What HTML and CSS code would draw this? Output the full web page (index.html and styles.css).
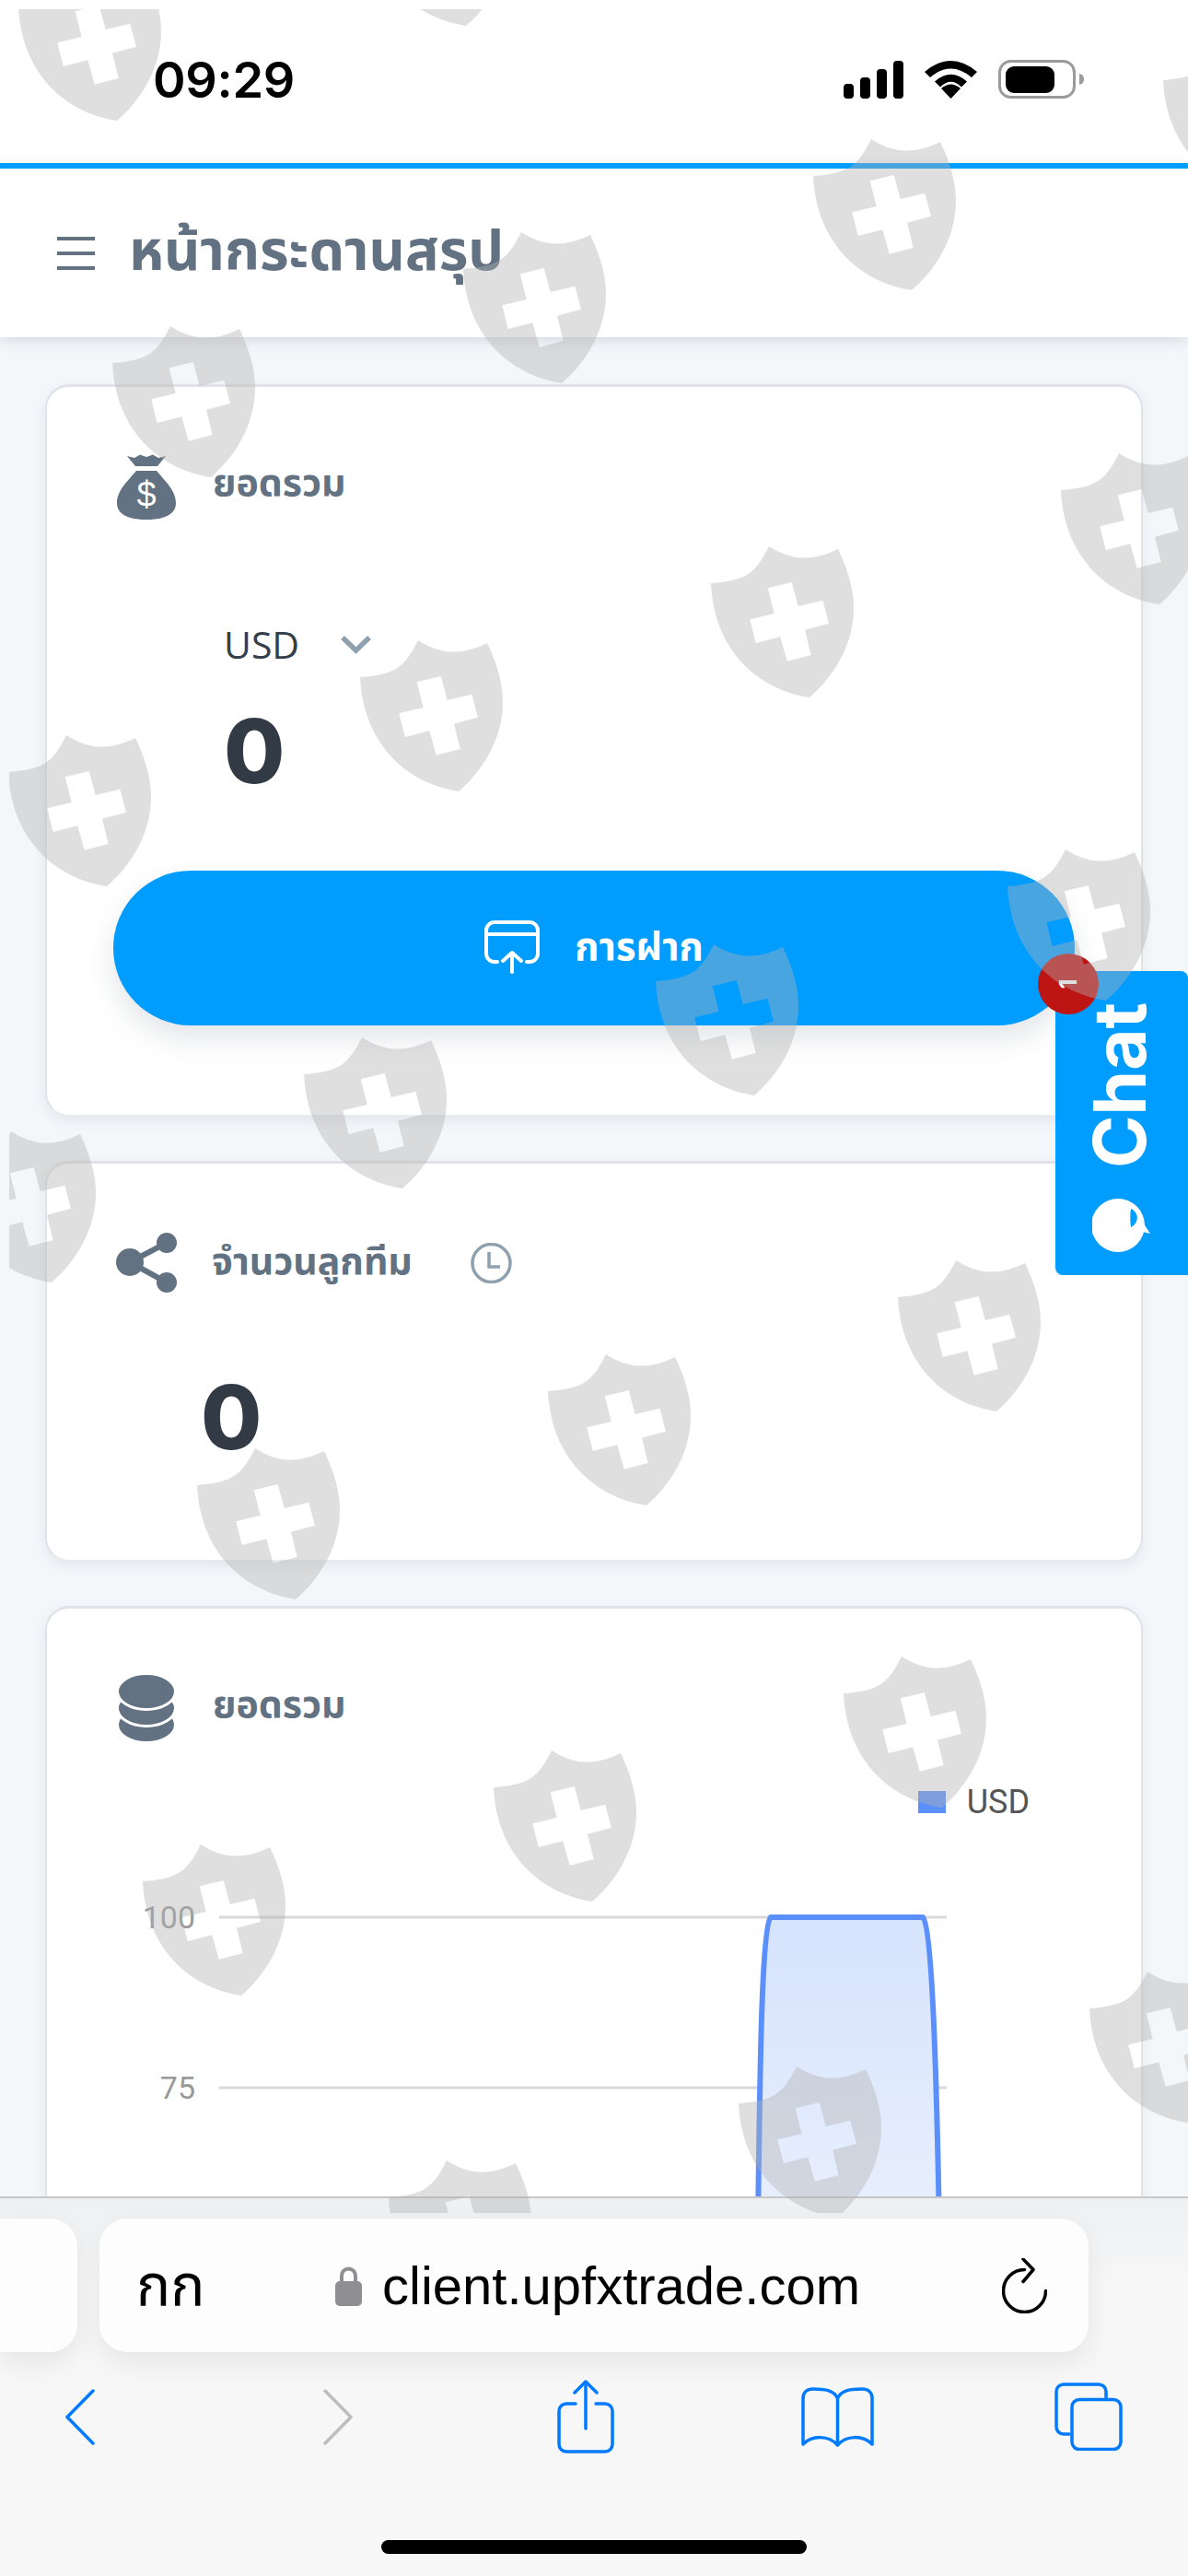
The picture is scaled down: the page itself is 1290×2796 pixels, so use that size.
FILE: index.html
```html
<!DOCTYPE html>
<html lang="th">
<head>
<meta charset="utf-8">
<title>หน้ากระดานสรุป</title>
<link rel="stylesheet" href="styles.css">
</head>
<body>
<div class="statusbar">
  <span class="time">09:29</span>
  <div class="status-icons">
    <svg class="ic-signal" viewBox="0 0 65 41"><rect x="0" y="25" width="11" height="16" rx="4"/><rect x="18" y="18" width="11" height="23" rx="4"/><rect x="36" y="9" width="11" height="32" rx="4"/><rect x="54" y="0" width="11" height="41" rx="4"/></svg>
    <svg class="ic-wifi" viewBox="0 0 57 42"><path d="M28.5 42 18 31q10.500-9 21 0z"/><path d="M11 23.500q17.500-15.500 35 0l-6 6q-11.500-11.500-23 0z"/><path d="M0 13q28.500-24 57 0l-6 6q-22.500-19-45 0z"/></svg>
    <svg class="ic-batt" viewBox="0 0 93 42"><rect x="1.500" y="1.500" width="81" height="39" rx="12" class="batt-frame"/><rect x="8" y="7" width="53" height="29" rx="9"/><path d="M88 15q5 1 5 6t-5 6z" class="batt-tip"/></svg>
  </div>
</div>
<header class="topbar">
  <svg class="ic-menu" viewBox="0 0 41 36"><path d="M0 2h41M0 18h41M0 34h41"/></svg>
  <h1 class="page-title">หน้ากระดานสรุป</h1>
</header>
<main class="content">
  <section class="card card-balance">
    <div class="card-head">
      <svg class="ic-bag" viewBox="0 0 64 72"><path d="M11 3l8 2 6-3.500L32 4l7-2.500L45 5l8-2-9 11H20z"/><path d="M21 19h22c9 11 21 21 21 35 0 12-12 18-32 18S0 66 0 54c0-14 12-24 21-35z"/><text x="32" y="58" class="bag-dollar">$</text></svg>
      <h2 class="card-title">ยอดรวม</h2>
    </div>
    <div class="currency">
      <span>USD</span>
      <svg class="ic-chev" viewBox="0 0 35 21"><path d="M3 3l14.500 14L32 3"/></svg>
    </div>
    <div class="big-num balance-num">0</div>
    <button class="deposit" type="button">
      <svg class="ic-upload" viewBox="0 0 62 60"><path d="M14 45h-3a9 9 0 0 1-9-9V11a9 9 0 0 1 9-9h38a9 9 0 0 1 9 9v25a9 9 0 0 1-9 9h-3M2 15h56M30 56V36M20 44l10-9 10 9"/></svg>
      <span class="deposit-label">การฝาก</span>
    </button>
  </section>
  <section class="card card-team">
    <div class="card-head head-team">
      <svg class="ic-share" viewBox="0 0 66 65"><path d="M15 32 55 11M15 32l40 22" class="share-line"/><circle cx="15" cy="32" r="15"/><circle cx="55" cy="11" r="11"/><circle cx="55" cy="54" r="11"/></svg>
      <h2 class="card-title">จำนวนลูกทีม</h2>
      <svg class="ic-clock" viewBox="0 0 45 44"><circle cx="22.500" cy="22" r="20.500"/><path d="M20 10v16h12"/></svg>
    </div>
    <div class="big-num team-num">0</div>
  </section>
  <section class="card card-chart">
    <div class="card-head head-chart">
      <svg class="ic-db" viewBox="0 0 60 72"><ellipse cx="30" cy="54" rx="30" ry="18"/><ellipse cx="30" cy="36" rx="31.500" ry="19.500" class="db-gap"/><ellipse cx="30" cy="18" rx="31.500" ry="19.500" class="db-gap"/></svg>
      <h2 class="card-title">ยอดรวม</h2>
    </div>
    <div class="legend"><i class="swatch"></i><span>USD</span></div>
    <svg class="chart" viewBox="0 0 1000 420">
      <defs><linearGradient id="areaFill" x1="0" y1="0" x2="0" y2="1"><stop offset="0" stop-color="#d6e3fd"/><stop offset="1" stop-color="#e9f0fd"/></linearGradient></defs>
      <path d="M111 81H901M111 266H901" class="grid"/>
      <text x="85" y="93" class="axis">100</text>
      <text x="85" y="278" class="axis">75</text>
      <path d="M696 420C698 250 700 90 710 81H875C885 90 890 250 893 420Z" class="area"/>
      <path d="M696 420C698 250 700 90 710 81H875C885 90 890 250 893 420" class="line"/>
    </svg>
  </section>
</main>
<aside class="chat">
  <span class="chat-badge"><b>1</b></span>
  <span class="chat-label">Chat</span>
  <svg class="ic-chat" viewBox="0 0 64 60"><circle cx="28" cy="30" r="29"/><path d="M40 4 63 39 50 36 30 20z"/><path d="M42 12c8 3 10 15 0 20-1-7-1-14 0-20z" class="chat-eye"/></svg>
</aside>
<div class="toolbar">
  <div class="url-row">
    <div class="prev-tab"></div>
    <div class="urlbar">
      <span class="aa">กก</span>
      <svg class="ic-lock" viewBox="0 0 29 43"><path d="M7 18V10a7.500 7.500 0 0 1 15 0v8" class="lock-arc"/><rect y="16" width="29" height="27" rx="5"/></svg>
      <span class="url">client.upfxtrade.com</span>
      <svg class="ic-reload" viewBox="0 0 49 60"><path d="M24.500 12.500a23 23 0 1 0 23 23M23 1l11 11.500-11 13"/></svg>
    </div>
  </div>
  <nav class="nav-row">
    <svg class="nav-ic ic-back" viewBox="0 0 33 61"><path d="M31 2 3 30.500 31 59"/></svg>
    <svg class="nav-ic ic-fwd" viewBox="0 0 34 61"><path d="m3 2 28 28.500L3 59"/></svg>
    <svg class="nav-ic ic-sharebox" viewBox="0 0 62 80"><path d="M20 26H10a8 8 0 0 0-8 8v36a8 8 0 0 0 8 8h42a8 8 0 0 0 8-8V34a8 8 0 0 0-8-8H42M31 53V2M19 14 31 2l12 12"/></svg>
    <svg class="nav-ic ic-book" viewBox="0 0 79 65"><path d="M39.500 12C35 3 25 2 13 2 6 2 2 6 2 12v50c10-10 28-10 37.500 1C49 52 67 52 77 62V12c0-6-4-10-11-10-12 0-22 1-26.500 10zm0 0v51"/></svg>
    <svg class="nav-ic ic-tabs" viewBox="0 0 74 74"><path d="M16 56h-6a8 8 0 0 1-8-8V10a8 8 0 0 1 8-8h38a8 8 0 0 1 8 8v6"/><rect x="19" y="18.500" width="53" height="54" rx="8"/></svg>
  </nav>
  <div class="home-bar"></div>
</div>
<svg class="watermark" viewBox="10 10 1280 2392" aria-hidden="true">
  <defs>
    <path id="shield" fill-rule="evenodd" d="M0 0Q18 12 37 12.500 55 13 75 3C88 30 92 50 92 67 92 105 72 140 44 164-15 155-60 110-63 40-25 37-15 30 0 0ZM-1.300 45.300 5.700 73-20.700 79.300-14.300 105 12.300 98.300 19.700 124.700 45.700 118 39 90.700 65 83.700 58.300 58.700 31.700 65 24.700 39Z"/>
  </defs>
  <use href="#shield" x="83" y="-33"/><use href="#shield" x="462" y="-136"/><use href="#shield" x="1326" y="47"/>
  <use href="#shield" x="946" y="151"/><use href="#shield" x="566" y="252"/><use href="#shield" x="185" y="354"/>
  <use href="#shield" x="1215" y="492"/><use href="#shield" x="835" y="593"/><use href="#shield" x="454" y="695"/><use href="#shield" x="72" y="798"/>
  <use href="#shield" x="1157" y="922"/><use href="#shield" x="775" y="1025"/><use href="#shield" x="393" y="1126"/><use href="#shield" x="12" y="1228"/>
  <use href="#shield" x="1038" y="1368"/><use href="#shield" x="658" y="1470"/><use href="#shield" x="277" y="1572"/>
  <use href="#shield" x="979" y="1798"/><use href="#shield" x="599" y="1900"/><use href="#shield" x="218" y="2002"/>
  <use href="#shield" x="1246" y="2140"/><use href="#shield" x="865" y="2243"/><use href="#shield" x="485" y="2345"/>
</svg>
</body>
</html>
```
FILE: styles.css
```css
* { box-sizing: border-box; }
html, body { margin: 0; height: 2796px; overflow: hidden; }
body {
  position: relative;
  width: 1290px;
  background: #f4f7fa;
  font-family: "Noto Sans", "Noto Sans Thai", "Sarabun", "Loma", "Garuda", "DejaVu Sans", sans-serif;
}
h1, h2 { margin: 0; }
svg { display: block; flex: none; }

/* status bar */
.statusbar {
  height: 177px;
  background: #fff;
  display: flex;
  justify-content: space-between;
  align-items: flex-start;
  padding: 56px 113px 0 166px;
}
.time { font: 600 54px/62px Inter, sans-serif; color: #000; letter-spacing: -.3px; }
.status-icons { display: flex; align-items: center; margin-top: 9px; }
.ic-signal { width: 65px; height: 41px; }
.ic-wifi { width: 57px; height: 42px; margin-left: 23px; }
.ic-batt { width: 93px; height: 42px; margin-left: 23px; }
.batt-frame { fill: none; stroke: #9b9b9b; stroke-width: 3; }
.batt-tip { fill: #9b9b9b; }

/* header */
.topbar {
  height: 189px;
  background: #fff;
  border-top: 6px solid #009dff;
  display: flex;
  align-items: center;
  padding-left: 62px;
  box-shadow: 0 4px 14px rgba(60, 72, 88, .16);
  position: relative;
}
.ic-menu { width: 41px; height: 36px; fill: none; stroke: #627282; stroke-width: 4; }
.page-title { margin-left: 37px; font-size: 61px; line-height: 80px; font-weight: 700; color: #627282; margin-top: -10px; }

/* cards */
.content { padding: 51px 49px 0; display: flex; flex-direction: column; gap: 48px; }
.card {
  background: #fff;
  border: 2px solid #e0e4ea;
  border-top-width: 3px;
  border-bottom-color: #e8ebef;
  border-radius: 26px;
  box-shadow: 0 5px 14px rgba(60, 72, 88, .09);
  padding-left: 76px;
}
.card-balance { height: 795px; padding-top: 72px; }
.card-team { height: 435px; padding-top: 75px; padding-left: 75px; }
.card-chart { height: 800px; padding-top: 72px; padding-left: 78px; }
.card-head { display: flex; align-items: center; gap: 40px; }
.head-team { gap: 38px; }
.head-chart { gap: 42px; }
.card-title { font-size: 41px; line-height: 50px; font-weight: 700; color: #627282; margin-top: -12px; }
.head-team .card-title { margin-top: -8px; }
.ic-bag { width: 64px; height: 72px; fill: #627282; }
.bag-dollar { font: 400 38px "Liberation Sans", sans-serif; fill: #fff; text-anchor: middle; }
.ic-share { width: 66px; height: 65px; fill: #627282; }
.share-line { fill: none; stroke: #627282; stroke-width: 6; }
.ic-clock { width: 45px; height: 44px; fill: none; stroke: #8fa0ae; stroke-width: 3.5; margin-left: 25px; }
.ic-db { width: 60px; height: 72px; fill: #627282; overflow: visible; }
.db-gap { stroke: #fff; stroke-width: 3; }

.currency { display: flex; align-items: center; margin: 111px 0 0 116px; font: 400 41px/48px "Open Sans", sans-serif; color: #343f4a; }
.ic-chev { width: 35px; height: 21px; margin-left: 44px; fill: none; stroke: #8fa0ae; stroke-width: 5.500; }
.big-num { font: 800 96px/96px Inter, sans-serif; color: #323a45; }
.balance-num { margin: 44px 0 0 116px; }
.team-num { margin: 87px 0 0 92px; }
.deposit {
  display: flex;
  align-items: center;
  justify-content: center;
  gap: 36px;
  width: 1044px;
  height: 168px;
  margin: 82px 0 0 -4px;
  border: 0;
  border-radius: 84px;
  background: #009dff;
  box-shadow: 0 14px 30px rgba(60, 72, 88, .14);
  color: #fff;
  font: 700 42px/48px "Noto Sans", "Noto Sans Thai", "Sarabun", "Loma", "Garuda", sans-serif;
}
.deposit-label { margin-top: -6px; }
.ic-upload { width: 62px; height: 60px; fill: none; stroke: #fff; stroke-width: 4; stroke-linecap: round; stroke-linejoin: round; }

/* chart */
.legend { display: flex; justify-content: flex-end; align-items: center; gap: 23px; margin: 46px 121px 0 0; font: 400 36px/40px Roboto, sans-serif; color: #555; }
.swatch { width: 30px; height: 24px; background: #5b8ffb; }
.chart { width: 1000px; height: 420px; margin: 24px 0 0 -2px; }
.grid { fill: none; stroke: #d9d9d9; stroke-width: 3; }
.axis { font: 400 34px Roboto, sans-serif; fill: #999; text-anchor: end; }
.area { fill: url(#areaFill); }
.line { fill: none; stroke: #5b8ffb; stroke-width: 6; }

/* chat */
.chat {
  position: absolute;
  top: 1054px;
  right: 0;
  width: 144px;
  height: 330px;
  background: #009dff;
  border-radius: 8px 8px 0 8px;
  display: flex;
  flex-direction: column;
  align-items: center;
  padding-top: 34px;
  color: #fff;
}
.chat-label {
  writing-mode: vertical-rl;
  transform: rotate(180deg);
  font: 700 78px/78px Inter, sans-serif;
  margin-left: -4px;
}
.ic-chat { width: 64px; height: 60px; margin-top: 32px; fill: #fff; }
.chat-eye { fill: #009dff; }
.chat-badge {
  position: absolute;
  top: -19px;
  left: -19px;
  width: 66px;
  height: 66px;
  border-radius: 50%;
  background: #bd1414;
  display: flex;
  align-items: center;
  justify-content: center;
}
.chat-badge b { transform: rotate(-90deg); font: 700 26px/26px Inter, sans-serif; }

/* browser toolbar */
.toolbar {
  position: absolute;
  left: 0;
  right: 0;
  bottom: 0;
  height: 412px;
  background: linear-gradient(#eff0f1, #f7f7f8 90px);
  border-top: 2px solid #c4c6c8;
  padding-top: 22px;
}
.url-row { display: flex; gap: 24px; }
.prev-tab { width: 84px; height: 145px; background: #fdfdfd; border-radius: 0 30px 30px 0; box-shadow: 0 10px 30px rgba(0, 0, 0, .08); }
.urlbar {
  width: 1074px;
  height: 145px;
  background: #fdfdfd;
  border-radius: 30px;
  box-shadow: 0 10px 30px rgba(0, 0, 0, .08);
  display: flex;
  align-items: center;
  padding: 0 45px 0 42px;
}
.aa { width: 70px; font-size: 62px; line-height: 70px; color: #000; white-space: nowrap; margin-top: -6px; margin-left: -2px; margin-right: 2px; }
.ic-lock { width: 29px; height: 43px; margin-left: 144px; fill: #8e8e93; margin-top: 2px; }
.lock-arc { fill: none; stroke: #8e8e93; stroke-width: 4; }
.url { margin-left: 22px; font: 400 58px/70px "Liberation Sans", sans-serif; color: #000; }
.ic-reload { width: 49px; height: 60px; margin-left: auto; fill: none; stroke: #000; stroke-width: 3.500; stroke-linecap: round; stroke-linejoin: round; }
.nav-row { display: flex; align-items: center; height: 80px; margin-top: 30px; padding-left: 70px; }
.nav-ic { fill: none; stroke: #007aff; stroke-width: 3.500; stroke-linecap: round; stroke-linejoin: round; }
.ic-back { width: 33px; height: 61px; }
.ic-fwd { width: 34px; height: 61px; margin-left: 247px; stroke: #bdbdbd; }
.ic-sharebox { width: 62px; height: 80px; margin-left: 221px; }
.ic-book { width: 79px; height: 65px; margin-left: 203px; }
.ic-tabs { width: 74px; height: 74px; margin-left: 196px; }
.home-bar { width: 462px; height: 15px; margin: 94px auto 0; background: #000; border-radius: 8px; }

/* watermark layer */
.watermark { position: absolute; left: 10px; top: 10px; width: 1280px; height: 2392px; pointer-events: none; fill: rgba(178, 178, 178, .41); }
```
